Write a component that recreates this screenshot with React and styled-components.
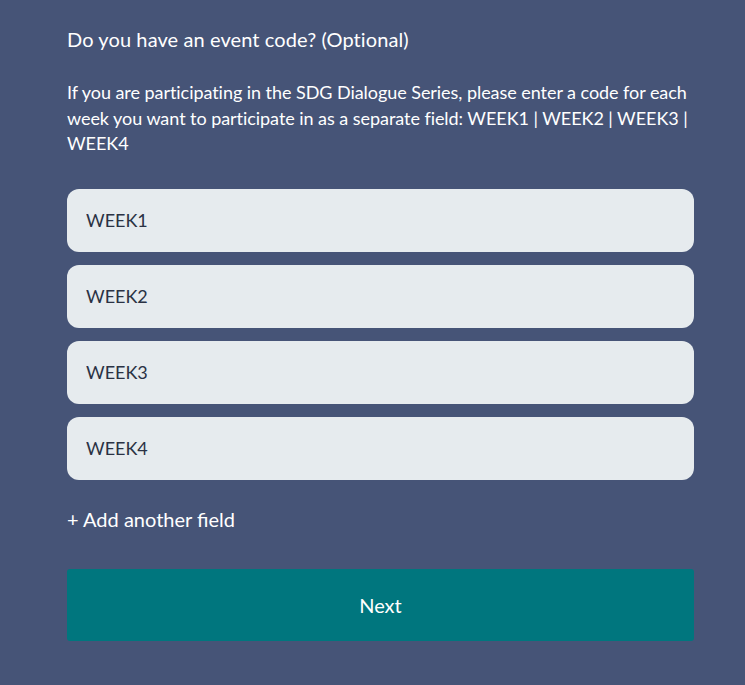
import React from "react";
import styled, { createGlobalStyle } from "styled-components";

const Global = createGlobalStyle`
  html, body { margin: 0; padding: 0; background: #465477; }
  body { font-family: "Lato", "Open Sans", sans-serif; }
`;

const Page = styled.div`
  width: 745px;
  min-height: 685px;
  box-sizing: border-box;
  padding: 25px 51px 40px 67px;
  color: #ffffff;
`;

const Heading = styled.h2`
  margin: 0;
  font-size: 20px;
  font-weight: 400;
  line-height: 28px;
  letter-spacing: 0.1px;
`;

const Intro = styled.p`
  margin: 27px 0 0;
  font-size: 18px;
  line-height: 25.5px;
  letter-spacing: -0.05px;
`;

const Fields = styled.div`
  display: flex;
  flex-direction: column;
  gap: 13px;
  margin-top: 32px;
`;

const Field = styled.input`
  box-sizing: border-box;
  width: 100%;
  height: 63px;
  border: none;
  border-radius: 12px;
  background: #e6ebee;
  padding: 0 19px;
  font-family: "Lato", sans-serif;
  font-size: 18px;
  color: #2a3244;
  outline: none;
`;

const AddLink = styled.button`
  margin-top: 25px;
  padding: 0;
  border: none;
  background: none;
  color: #ffffff;
  font-family: "Lato", sans-serif;
  font-size: 20px;
  line-height: 28px;
  letter-spacing: 0px;
  cursor: pointer;
  text-align: left;
`;

const NextButton = styled.button`
  display: block;
  margin-top: 36px;
  width: 100%;
  height: 72px;
  border: none;
  border-radius: 3px;
  background: #00767e;
  color: #ffffff;
  font-family: "Lato", sans-serif;
  font-size: 20px;
  cursor: pointer;
`;

export default function App() {
  const weeks = ["WEEK1", "WEEK2", "WEEK3", "WEEK4"];
  return (
    <>
      <Global />
      <Page>
        <Heading>Do you have an event code? (Optional)</Heading>
        <Intro>
          If you are participating in the SDG Dialogue Series, please enter a code for each
          week you want to participate in as a separate field: WEEK1 | WEEK2 | WEEK3 |
          WEEK4
        </Intro>
        <Fields>
          {weeks.map((w) => (
            <Field key={w} defaultValue={w} />
          ))}
        </Fields>
        <AddLink>+ Add another field</AddLink>
        <NextButton>Next</NextButton>
      </Page>
    </>
  );
}
